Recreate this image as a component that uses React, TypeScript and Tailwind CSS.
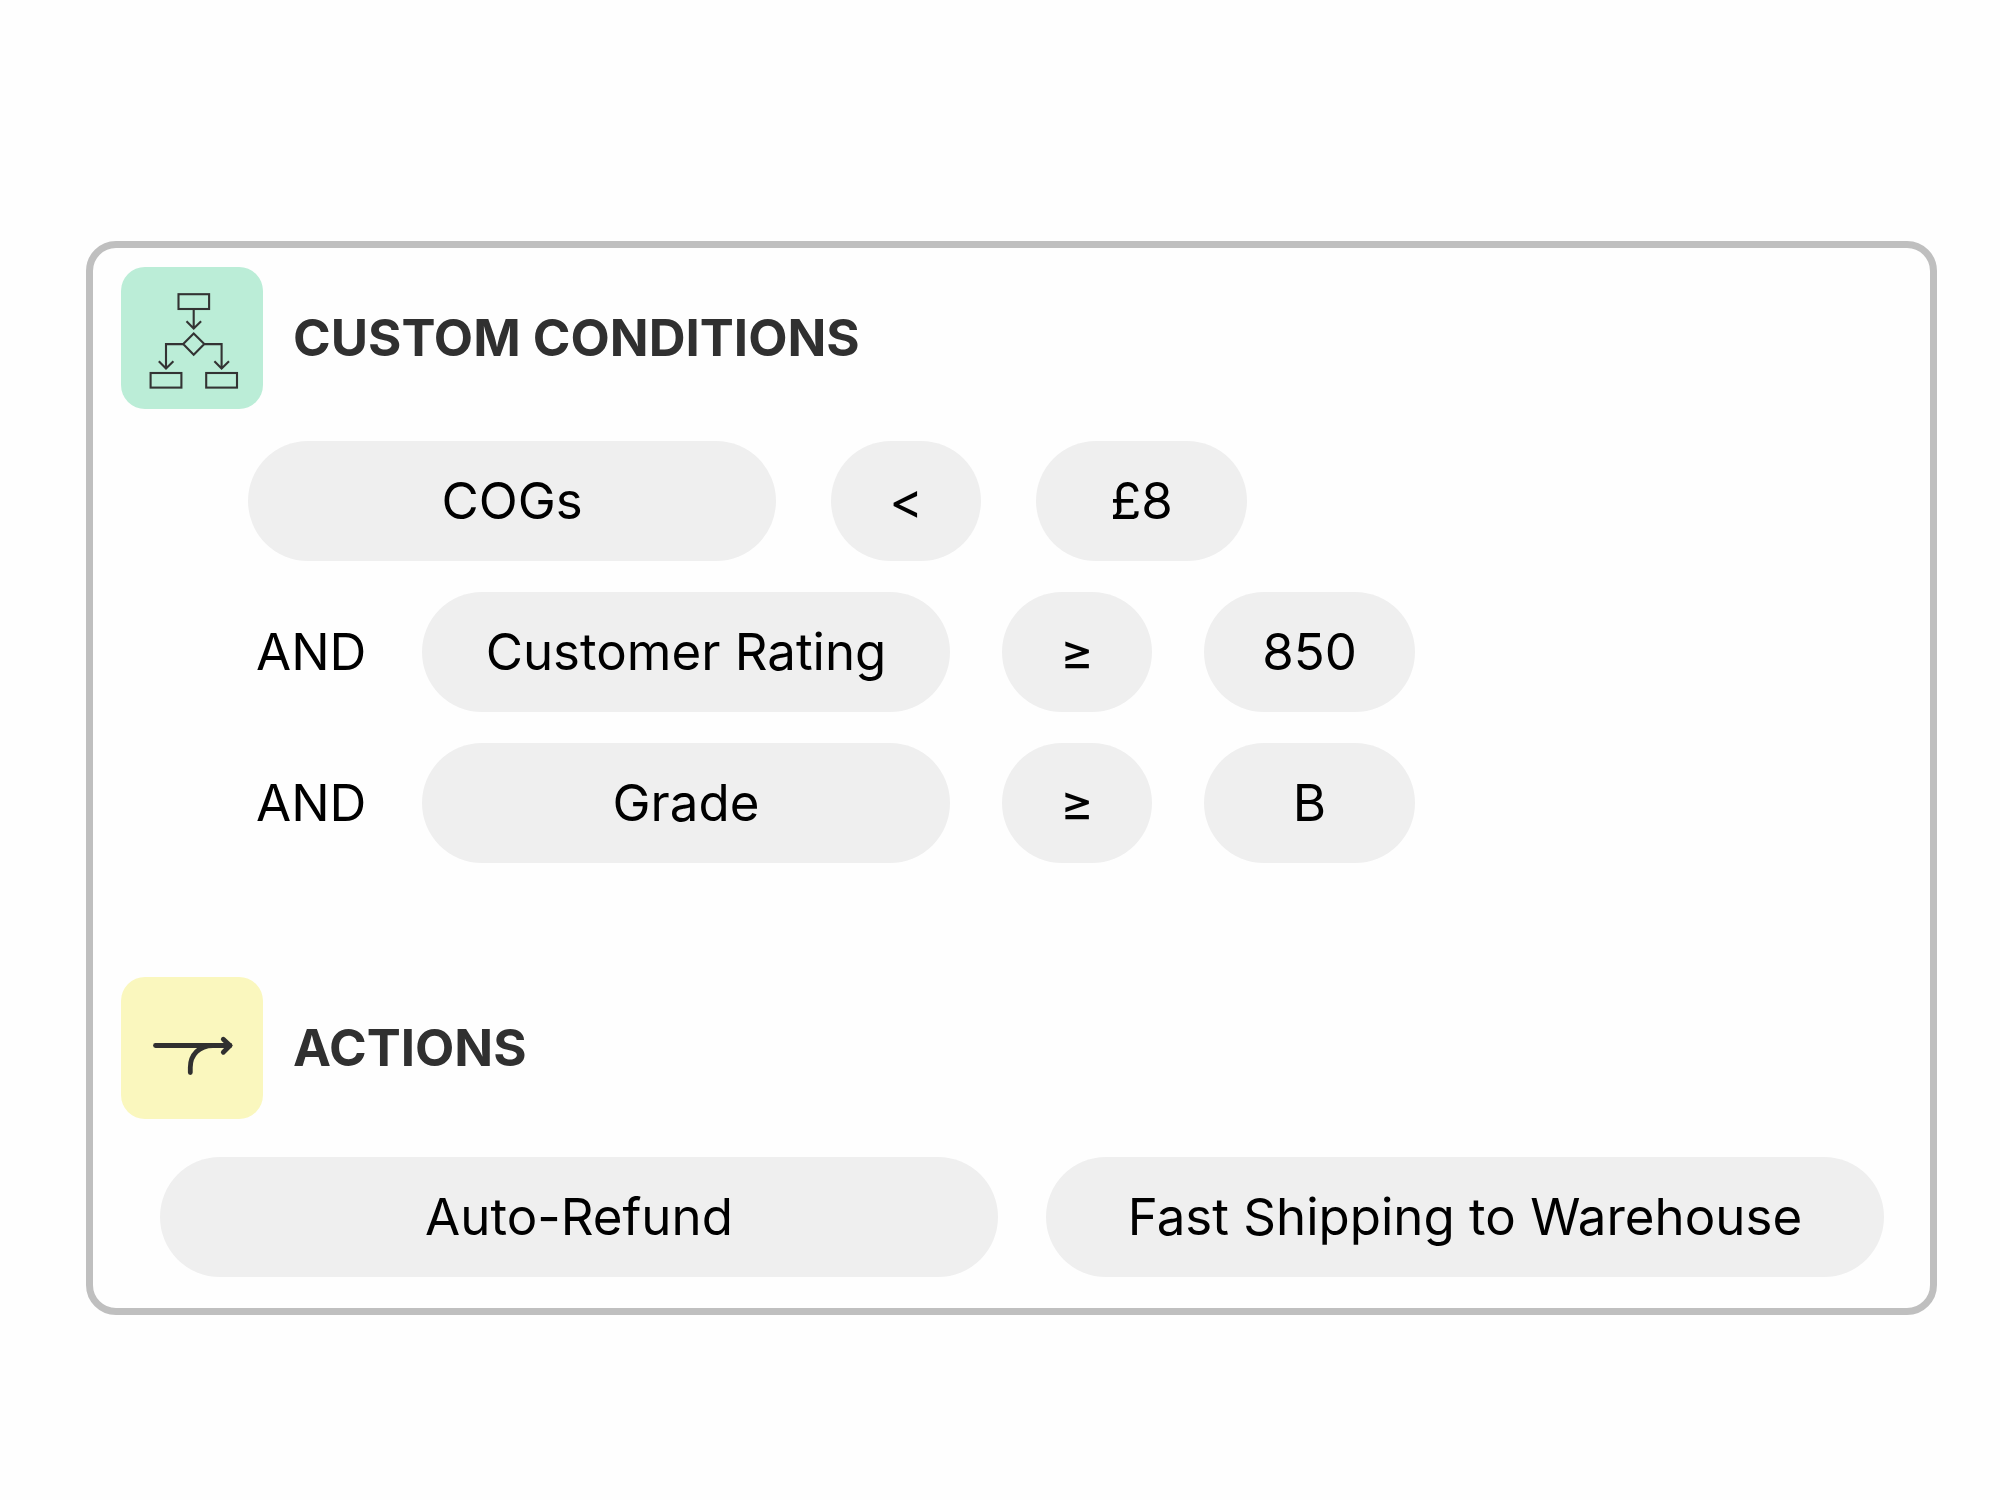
import { ReactNode } from 'react';

type Condition = {
    joiner?: string;
    field: string;
    operator: string;
    value: string;
};

const conditions: Condition[] = [
    { field: 'COGs', operator: '<', value: '£8' },
    { joiner: 'AND', field: 'Customer Rating', operator: '≥', value: '850' },
    { joiner: 'AND', field: 'Grade', operator: '≥', value: 'B' },
];

const actions = ['Auto-Refund', 'Fast Shipping to Warehouse'];

const FlowIcon = () => (
    <svg viewBox="0 1 142 142" className="h-full w-full" fill="none" stroke="#333333" strokeWidth="2.1" aria-hidden="true">
        <rect x="57.5" y="28.2" width="30.6" height="14.8" />
        <path d="M72.7 43v19.5M65.5 55.3l7.2 7.2 7.4-7.2" />
        <path d="M72.7 67.6l10.6 10.5-10.6 10.6L62.2 78.1z" />
        <path d="M62.2 78.1H45v24.4M37.8 95.3l7.2 7.2 7.4-7.2" />
        <path d="M83.3 78.1h17.3v24.4M93.4 95.3l7.2 7.2 7.4-7.2" />
        <rect x="29.6" y="107" width="30.8" height="14.6" />
        <rect x="85.2" y="107" width="30.8" height="14.6" />
    </svg>
);

const MergeIcon = () => (
    <svg
        viewBox="0 0 142 142"
        className="h-full w-full"
        fill="none"
        stroke="#303030"
        strokeWidth="4.8"
        strokeLinecap="round"
        strokeLinejoin="round"
        aria-hidden="true"
    >
        <path d="M34.5 68.5H109" />
        <path d="M102.3 62.2l6.7 6.3-6.7 6.7" />
        <path d="M69.3 95.5v-5C69.3 78 78 68.5 92 68.5" />
    </svg>
);

const SectionTitle = ({ icon, color, title }: { icon: ReactNode; color: string; title: string }) => (
    <div className="flex items-center gap-[30px] pl-7">
        <div className={`h-[142px] w-[142px] shrink-0 rounded-3xl ${color}`}>{icon}</div>
        <h2 className="text-[51px] leading-[60px] font-bold text-[#303030]">{title}</h2>
    </div>
);

const Pill = ({ size, children }: { size: string; children: ReactNode }) => (
    <div className={`flex h-[120px] items-center justify-center rounded-full bg-[#efefef] ${size}`}>{children}</div>
);

const App = () => {
    return (
        <main className="min-h-screen bg-[#fefefe] pt-[241px] pr-[63px] pb-16 pl-[86px] font-['Inter',sans-serif] text-[51px] leading-[60px] text-black">
            <div className="rounded-[30px] border-[7px] border-[#bfbfbf] pt-[19px] pb-[31px]">
                <section>
                    <SectionTitle icon={<FlowIcon />} color="bg-[#bbedd7]" title="CUSTOM CONDITIONS" />
                    <ul className="mt-8 flex flex-col gap-[31px] pl-[155px]">
                        {conditions.map((condition) => (
                            <li
                                key={condition.field}
                                className={condition.joiner ? 'flex items-center gap-[52px]' : 'flex items-center gap-[55px]'}
                            >
                                {condition.joiner && <span className="w-[122px] pl-2">{condition.joiner}</span>}
                                <Pill size="w-[528px]">{condition.field}</Pill>
                                <Pill size="w-[150px]">{condition.operator}</Pill>
                                <Pill size="w-[211px]">{condition.value}</Pill>
                            </li>
                        ))}
                    </ul>
                </section>
                <section className="mt-[114px]">
                    <SectionTitle icon={<MergeIcon />} color="bg-[#faf7be]" title="ACTIONS" />
                    <div className="mt-[38px] flex gap-12 pr-[46px] pl-[67px]">
                        {actions.map((action) => (
                            <Pill key={action} size="flex-1">
                                {action}
                            </Pill>
                        ))}
                    </div>
                </section>
            </div>
        </main>
    );
};

export default App;
